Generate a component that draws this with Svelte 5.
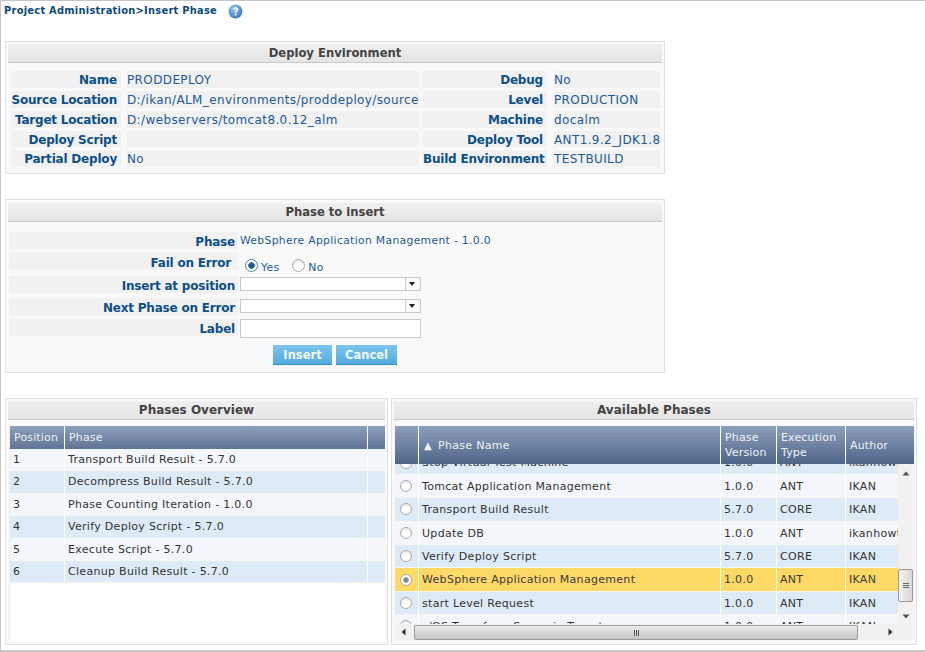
<script>
  const env = [
    ['Name', 'PRODDEPLOY', 'Debug', 'No'],
    ['Source Location', 'D:/ikan/ALM_environments/proddeploy/source', 'Level', 'PRODUCTION'],
    ['Target Location', 'D:/webservers/tomcat8.0.12_alm', 'Machine', 'docalm'],
    ['Deploy Script', '', 'Deploy Tool', 'ANT1.9.2_JDK1.8'],
    ['Partial Deploy', 'No', 'Build Environment', 'TESTBUILD']
  ];
  const overview = [
    'Transport Build Result - 5.7.0',
    'Decompress Build Result - 5.7.0',
    'Phase Counting Iteration - 1.0.0',
    'Verify Deploy Script - 5.7.0',
    'Execute Script - 5.7.0',
    'Cleanup Build Result - 5.7.0'
  ];
  const phases = [
    ['Stop Virtual Test Machine', '1.0.0', 'ANT', 'ikanhowto'],
    ['Tomcat Application Management', '1.0.0', 'ANT', 'IKAN'],
    ['Transport Build Result', '5.7.0', 'CORE', 'IKAN'],
    ['Update DB', '1.0.0', 'ANT', 'ikanhowto'],
    ['Verify Deploy Script', '5.7.0', 'CORE', 'IKAN'],
    ['WebSphere Application Management', '1.0.0', 'ANT', 'IKAN'],
    ['start Level Request', '1.0.0', 'ANT', 'IKAN'],
    ['z/OS Transform Scenario Target', '1.0.0', 'ANT', 'IKAN']
  ];
</script>

<div class="page">
  <div class="crumb">
    <span>Project Administration&gt;Insert Phase</span>
    <svg class="help" width="15" height="15" viewBox="0 0 15 15">
      <defs>
        <radialGradient id="hg" cx="0.4" cy="0.3" r="0.8">
          <stop offset="0" stop-color="#9cc6ec" />
          <stop offset="1" stop-color="#2a6fb5" />
        </radialGradient>
      </defs>
      <circle cx="7.5" cy="7.5" r="7" fill="url(#hg)" />
      <path d="M5 5.6C5.2 3.9 6.3 3.2 7.7 3.2C9.3 3.2 10.3 4.1 10.3 5.3C10.3 6.9 8.4 7 8.3 8.8H6.7C6.7 6.8 8.4 6.5 8.4 5.4C8.4 4.9 8.1 4.6 7.6 4.6C7 4.6 6.7 5 6.6 5.7Z" fill="#fff" />
      <rect x="6.7" y="9.8" width="1.7" height="1.7" fill="#fff" />
    </svg>
  </div>

  <section class="panel env">
    <h2>Deploy Environment</h2>
    <div class="env-grid">
      {#each env as r}
        <div class="lab">{r[0]}</div>
        <div class="val">{r[1]}</div>
        <div class="lab">{r[2]}</div>
        <div class="val">{r[3]}</div>
      {/each}
    </div>
  </section>

  <section class="panel form">
    <h2>Phase to insert</h2>
    <div class="frow r1">
      <div class="flab">Phase</div>
      <div class="fval phase-val">WebSphere Application Management - 1.0.0</div>
    </div>
    <div class="frow r2">
      <div class="flab fail">Fail on Error</div>
      <div class="fval radios">
        <span class="rad on"></span><span class="rt">Yes</span>
        <span class="rad no"></span><span class="rt">No</span>
      </div>
    </div>
    <div class="frow r3">
      <div class="flab">Insert at position</div>
      <div class="select"><span class="arrow"></span></div>
    </div>
    <div class="frow r4">
      <div class="flab">Next Phase on Error</div>
      <div class="select"><span class="arrow"></span></div>
    </div>
    <div class="frow r5">
      <div class="flab">Label</div>
      <div class="input"></div>
    </div>
    <div class="buttons">
      <button class="b1">Insert</button>
      <button class="b2">Cancel</button>
    </div>
  </section>

  <div class="bottom">
    <section class="panel left">
      <h2>Phases Overview</h2>
      <div class="ltable">
        <div class="lhead">
          <div class="c-pos">Position</div>
          <div class="c-ph">Phase</div>
          <div class="c-x"></div>
        </div>
        {#each overview as p, i}
          <div class="lrow" class:alt={i % 2 === 1}>
            <div class="c-pos">{i + 1}</div>
            <div class="c-ph">{p}</div>
            <div class="c-x"></div>
          </div>
        {/each}
      </div>
    </section>

    <section class="panel right">
      <h2>Available Phases</h2>
      <div class="rtable">
        <div class="rhead">
          <div class="d-r"></div>
          <div class="d-n"><span class="tri">▲</span><span>Phase Name</span></div>
          <div class="d-v">Phase Version</div>
          <div class="d-e">Execution Type</div>
          <div class="d-a">Author</div>
        </div>
        <div class="rbody">
          <div class="view">
            <div class="scrolled">
              {#each phases as p, i}
                <div class="prow" class:alt={i % 2 === 0} class:sel={i === 5}>
                  <div class="d-r"><span class="rad" class:picked={i === 5}></span></div>
                  <div class="d-n">{p[0]}</div>
                  <div class="d-v">{p[1]}</div>
                  <div class="d-e">{p[2]}</div>
                  <div class="d-a">{p[3]}</div>
                </div>
              {/each}
            </div>
          </div>
          <div class="vbar">
            <svg class="up" width="8" height="5" viewBox="0 0 8 5"><path d="M4 0.5L7.5 4.5H0.5Z" fill="#555" /></svg>
            <div class="vthumb"><span></span><span></span><span></span></div>
            <svg class="down" width="8" height="5" viewBox="0 0 8 5"><path d="M0.5 0.5H7.5L4 4.5Z" fill="#555" /></svg>
          </div>
          <div class="hbar">
            <svg class="lft" width="5" height="8" viewBox="0 0 5 8"><path d="M4.5 0.5V7.5L0.5 4Z" fill="#333" /></svg>
            <div class="hthumb"><span></span><span></span><span></span></div>
            <svg class="rgt" width="5" height="8" viewBox="0 0 5 8"><path d="M0.5 0.5V7.5L4.5 4Z" fill="#333" /></svg>
          </div>
          <div class="corner"></div>
        </div>
      </div>
    </section>
  </div>
</div>

<style>
  :global(body) {
    margin: 0;
    background: #fff;
  }
  .page {
    box-sizing: border-box;
    width: 925px;
    height: 652px;
    border: 1px solid #c6c6c6;
    border-width: 1px 0 2px 1px;
    padding: 0 0 0 4px;
    font-family: "DejaVu Sans", Verdana, sans-serif;
    overflow: hidden;
  }
  .crumb {
    display: flex;
    align-items: flex-start;
    height: 40px;
    font-size: 9.9px;
    font-weight: bold;
    color: #0d4a7c;
    letter-spacing: 0.26px;
    margin-left: -1px;
    padding-top: 4px;
    box-sizing: border-box;
  }
  .help {
    margin-left: 11px;
    margin-top: -1px;
  }
  .panel {
    box-sizing: border-box;
    border: 1px solid #e0e0e0;
    background: #f9f9f9;
    padding: 2px;
  }
  h2 {
    margin: 0;
    height: 19px;
    line-height: 18px;
    box-sizing: border-box;
    text-align: center;
    font-size: 11.6px;
    font-weight: bold;
    color: #444;
    background: linear-gradient(#f0f0f0, #e4e4e4);
    border-bottom: 1px solid #c9c9c9;
  }
  .env {
    width: 660px;
    height: 133px;
  }
  .env-grid {
    display: grid;
    grid-template-columns: 110px 298px 128px 113px;
    grid-template-rows: 17px 17px 17px 16px 17px;
    row-gap: 3px;
    margin: 8px 0 0 3px;
    font-size: 12px;
    line-height: 18px;
  }
  .lab {
    background: #f1f1f1;
    text-align: right;
    font-weight: bold;
    color: #0d4f87;
    padding-right: 4px;
    white-space: nowrap;
    box-sizing: border-box;
    letter-spacing: -0.2px;
  }
  .env-grid .lab:nth-child(4n + 3) {
    margin-left: 4px;
  }
  .val {
    background: #f1f1f1;
    color: #1d5a96;
    white-space: nowrap;
    margin-left: 6px;
    font-size: 12px;
    letter-spacing: 0.38px;
  }
  .env-grid .val:nth-child(4n) {
    margin-left: 7px;
  }
  .form {
    width: 660px;
    height: 174px;
    margin-top: 25px;
    padding-top: 3px;
  }
  .form h2 {
    line-height: 19px;
  }
  .frow {
    display: flex;
    align-items: flex-start;
    height: 17px;
  }
  .r1 { margin-top: 10px; }
  .r2 { margin-top: 4px; }
  .r3 { margin-top: 6px; }
  .r4 { margin-top: 5px; }
  .r5 { margin-top: 4px; }
  .flab {
    box-sizing: border-box;
    width: 229px;
    margin-left: 1px;
    height: 17px;
    background: #f1f1f1;
    text-align: right;
    padding-right: 3px;
    font-size: 12px;
    font-weight: bold;
    color: #0d4f87;
    line-height: 20px;
    letter-spacing: -0.2px;
  }
  .flab.fail {
    padding-right: 7px;
  }
  .fval {
    margin-left: 2px;
    color: #1d5a96;
  }
  .phase-val {
    font-size: 10.8px;
    line-height: 17px;
    letter-spacing: 0.32px;
  }
  .radios {
    display: flex;
    align-items: center;
    margin-left: 7px;
    height: 24px;
    font-size: 10.8px;
    padding-top: 4px;
    box-sizing: border-box;
    letter-spacing: 0.3px;
  }
  .rad {
    display: inline-block;
    box-sizing: border-box;
    width: 13px;
    height: 13px;
    border-radius: 50%;
    border: 1px solid #a9a9a9;
    background: radial-gradient(circle at 50% 70%, #fff 40%, #e0e0e0);
  }
  .rad.on {
    background: radial-gradient(circle, #0f4f86 0, #2a6fa8 3px, #fff 3.6px);
    border-color: #5a7f9e;
    margin-top: -3px;
  }
  .rad.no {
    margin: -3px 0 0 13px;
  }
  .rt {
    margin-left: 3px;
  }
  .select {
    box-sizing: border-box;
    position: relative;
    width: 181px;
    height: 14px;
    margin: 1px 0 0 2px;
    background: #fff;
    border: 1px solid #c9c9c9;
  }
  .arrow {
    position: absolute;
    right: 0;
    top: 0;
    bottom: 0;
    width: 14px;
    border-left: 1px solid #ccc;
    background: #f8f8f8;
  }
  .arrow::after {
    content: "";
    position: absolute;
    left: 3px;
    top: 4px;
    border: 3.5px solid transparent;
    border-top: 4px solid #222;
    border-bottom: 0;
  }
  .input {
    box-sizing: border-box;
    width: 181px;
    height: 19px;
    margin: 0 0 0 2px;
    background: #fff;
    border: 1px solid #c9c9c9;
  }
  .buttons {
    display: flex;
    gap: 4px;
    margin: 9px 0 0 265px;
  }
  button {
    box-sizing: border-box;
    height: 20px;
    border: 0;
    border-bottom: 1px solid #2e8bc4;
    background: linear-gradient(#7ec6ec, #52aade);
    color: #f2f8fc;
    font: bold 11.5px "DejaVu Sans", Verdana, sans-serif;
    padding: 0;
  }
  .b1 { width: 59px; }
  .b2 { width: 61px; }
  .bottom {
    display: flex;
    gap: 3px;
    margin-top: 25px;
  }
  .bottom h2 {
    font-size: 12px;
    line-height: 19px;
  }
  .left {
    width: 383px;
    height: 247px;
  }
  .right {
    width: 526px;
    height: 247px;
  }
  .ltable {
    margin: 6px 0 0 1px;
    height: 215px;
    background: #fff;
    font-size: 11px;
    color: #333;
    border-left: 1px solid #eee;
  }
  .lhead, .lrow {
    display: grid;
    grid-template-columns: 54px 303px 18px;
  }
  .lhead {
    height: 23px;
    line-height: 23px;
    background: linear-gradient(#8d9fbc, #5f7496);
    color: #eef2f6;
    letter-spacing: 0.15px;
  }
  .lhead .c-pos { padding-left: 4px; }
  .lhead .c-ph { padding-left: 4px; }
  .lhead > div + div, .lrow > div + div {
    border-left: 1px solid #fff;
    box-sizing: border-box;
  }
  .lrow {
    height: 22.4px;
    line-height: 21px;
    background: #f3f7fb;
    border-bottom: 1px solid #f6f6f0;
    box-sizing: border-box;
    letter-spacing: 0.3px;
  }
  .lrow.alt {
    background: #deebf6;
  }
  .lrow .c-pos { padding-left: 3px; }
  .lrow .c-ph { padding-left: 3px; }
  .rtable {
    margin: 6px 0 0 1px;
    font-size: 11px;
  }
  .rhead {
    display: grid;
    grid-template-columns: 23px 302px 56px 69px 69px;
    height: 38px;
    background: linear-gradient(#8d9fbc, #4f6588);
    color: #eef2f6;
    line-height: 15px;
    letter-spacing: 0.15px;
  }
  .rhead > div {
    display: flex;
    align-items: center;
    padding-left: 4px;
    box-sizing: border-box;
  }
  .rhead > div + div {
    border-left: 1px solid #fff;
  }
  .rhead .d-n {
    padding-left: 5px;
    letter-spacing: 0.3px;
  }
  .tri {
    font-size: 10px;
    margin-right: 6px;
  }
  .rbody {
    display: grid;
    grid-template-columns: 503px 16px;
    grid-template-rows: 160px 16px;
  }
  .view {
    overflow: hidden;
    height: 160px;
  }
  .scrolled {
    margin-top: -12.6px;
  }
  .prow {
    display: grid;
    grid-template-columns: 23px 302px 56px 69px 53px;
    height: 23.4px;
    line-height: 24px;
    background: #f3f7fb;
    color: #333;
    white-space: nowrap;
    border-bottom: 1px solid #f6f6f0;
    box-sizing: border-box;
    letter-spacing: 0.3px;
  }
  .prow.alt {
    background: #deebf6;
  }
  .prow.sel {
    background: #ffd966;
    color: #3b3b3b;
  }
  .prow > div {
    padding-left: 3px;
    box-sizing: border-box;
    overflow: hidden;
  }
  .prow > div + div {
    border-left: 1px solid #fff;
  }
  .prow .d-r {
    display: flex;
    align-items: center;
    justify-content: center;
    padding: 0;
  }
  .prow .rad {
    width: 12px;
    height: 12px;
    margin-left: -1px;
  }
  .prow .rad.picked {
    background: radial-gradient(circle, #777 0, #999 2.5px, #fff 3.2px);
  }
  .vbar {
    position: relative;
    background: #f1f1f1;
  }
  .up {
    position: absolute;
    left: 4px;
    top: 7px;
  }
  .down {
    position: absolute;
    left: 4px;
    top: 150px;
  }
  .vthumb {
    position: absolute;
    left: 0;
    top: 105px;
    width: 15px;
    height: 33px;
    box-sizing: border-box;
    border: 1px solid #9a9a9a;
    border-radius: 2px;
    background: linear-gradient(90deg, #f2f2f2, #d8d8d8);
    display: flex;
    flex-direction: column;
    align-items: center;
    justify-content: center;
    gap: 1px;
  }
  .vthumb span {
    width: 6px;
    height: 1px;
    background: #666;
  }
  .hbar {
    grid-column: 1;
    position: relative;
    background: #f1f1f1;
  }
  .lft {
    position: absolute;
    left: 6px;
    top: 4px;
  }
  .rgt {
    position: absolute;
    left: 493px;
    top: 4px;
  }
  .hthumb {
    position: absolute;
    left: 19px;
    top: 1px;
    width: 444px;
    height: 15px;
    box-sizing: border-box;
    border: 1px solid #9a9a9a;
    border-radius: 2px;
    background: linear-gradient(#ececec, #c4c4c4);
    display: flex;
    align-items: center;
    justify-content: center;
    gap: 1px;
  }
  .hthumb span {
    width: 1px;
    height: 6px;
    background: #555;
  }
  .corner {
    background: #f1f1f1;
  }
</style>
